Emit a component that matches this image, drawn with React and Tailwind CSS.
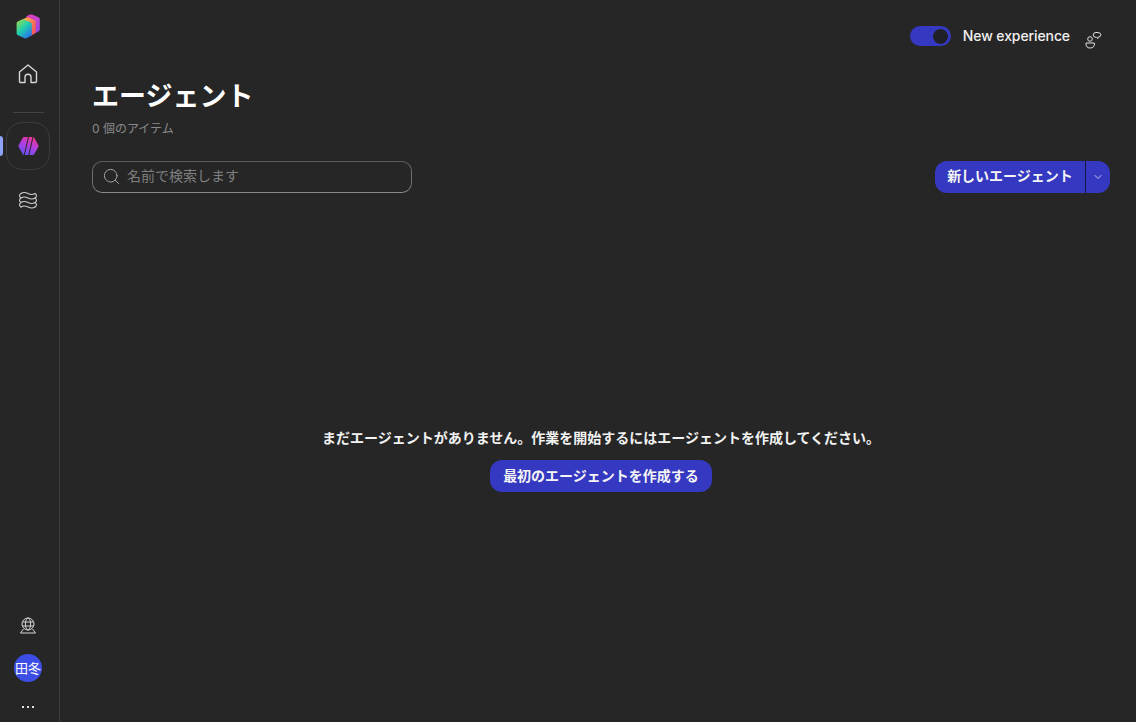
import { ChevronDown, Search } from "lucide-react";

const font = "font-['Inter','Noto_Sans_CJK_JP',sans-serif]";

function Logo() {
  return (
    <svg width="24" height="25" viewBox="0 0 24 25">
      <defs>
        <linearGradient id="lg1" x1="0" y1="0" x2="0.5" y2="1">
          <stop offset="0" stopColor="#ec3fb8" />
          <stop offset="1" stopColor="#9a46e6" />
        </linearGradient>
        <linearGradient id="lg2" x1="0" y1="0" x2="1" y2="0.6">
          <stop offset="0" stopColor="#fbc64e" />
          <stop offset="1" stopColor="#f2585a" />
        </linearGradient>
        <linearGradient id="lg3" x1="0" y1="0" x2="0.8" y2="1">
          <stop offset="0" stopColor="#a5dc48" />
          <stop offset="0.5" stopColor="#1fcfae" />
          <stop offset="1" stopColor="#2b6cf2" />
        </linearGradient>
      </defs>
      <path d="M10 2.500 14 .6q1-.4 2 0l6.500 2.700q1.300.6 1.300 2v10q0 1.300-1.100 2L17 20.500V8z" fill="url(#lg1)" />
      <path d="M5.500 6 10.500 3.500q1-.4 2 0l6 2.600q1.300.6 1.300 2v10.400l-5 3.500V9z" fill="url(#lg2)" />
      <path d="M.6 9.500q0-1.500 1.200-2L6 5.600q1-.4 2 0l6.500 3q1.300.6 1.300 2v9.600q0 1.200-1 1.800l-4.300 2.300q-1 .5-2 0l-5.900-2.800Q.6 20.800.6 19.400z" fill="url(#lg3)" />
    </svg>
  );
}

function HomeIcon() {
  return (
    <svg width="20" height="20" viewBox="0 0 20 20" fill="none" stroke="#d6d6d6" strokeWidth="1.4" strokeLinejoin="round">
      <path d="M1.500 8 10 1l8.500 7v9.200q0 1.300-1.300 1.300H13v-5.300a3 3 0 0 0-6 0v5.300H2.800q-1.300 0-1.300-1.300z" />
    </svg>
  );
}

function AgentIcon() {
  return (
    <svg width="21" height="20" viewBox="0 0 21 20">
      <defs>
        <linearGradient id="ag" x1="0.7" y1="0" x2="0.2" y2="1">
          <stop offset="0" stopColor="#f0358f" />
          <stop offset="0.45" stopColor="#b23fe0" />
          <stop offset="1" stopColor="#5f52f5" />
        </linearGradient>
      </defs>
      <path d="M6 1h9q.8 0 1.200.7l4.200 7.600q.4.700 0 1.400l-4.200 7.600q-.4.700-1.200.7H6q-.8 0-1.200-.7L.6 10.700q-.4-.7 0-1.400l4.200-7.600Q5.200 1 6 1z" fill="url(#ag)" />
      <path d="M10.500 1 6.300 19M15 1 10.800 19" stroke="#262626" strokeWidth="1" fill="none" />
    </svg>
  );
}

function WavesIcon() {
  return (
    <svg width="20" height="20" viewBox="0 0 20 20" fill="none" stroke="#cfcfcf" strokeWidth="1.100" strokeLinecap="round">
      <path d="M3 3.500c3-2 5-1 7 0s4 2 7 0" />
      <path d="M3 8c3-2 5-1 7 0s4 2 7 0" />
      <path d="M3 12.500c3-2 5-1 7 0s4 2 7 0" />
      <path d="M3 17c3-2 5-1 7 0s4 2 7 0" />
      <path d="M17 3.500c2 1 2 3.500 0 4.500M17 8c2 1 2 3.500 0 4.500M17 12.500c2 1 2 3.500 0 4.500" />
      <path d="M3 3.500c-2 1-2 3.500 0 4.500M3 8c-2 1-2 3.500 0 4.500M3 12.500c-2 1-2 3.500 0 4.500" />
    </svg>
  );
}

function GlobeIcon() {
  return (
    <svg width="18" height="18" viewBox="0 0 18 18" fill="none" stroke="#d4d4d4" strokeWidth="1">
      <circle cx="9" cy="7" r="6" />
      <ellipse cx="9" cy="7" rx="2.600" ry="6" />
      <path d="M3.300 5h11.400M3.300 9h11.400" />
      <path d="M4.500 12 1.500 16h15l-3-4" strokeLinejoin="round" />
    </svg>
  );
}

function PeopleIcon() {
  return (
    <svg width="18" height="18" viewBox="0 0 18 18" fill="none" stroke="#e0e0e0" strokeWidth="1">
      <circle cx="5" cy="8" r="2.300" />
      <path d="M11 1.500q-2.800 0-2.800 2.400t2.800 2.400h.4l1.500 1.400V6.200q3-.2 3-2.300T13 1.500z" />
      <path d="M1 12h8.400q.4 5-4.200 5T1 12z" />
    </svg>
  );
}

export default function App() {
  return (
    <div className={`flex h-[722px] w-[1136px] overflow-hidden bg-[#262626] text-white ${font}`}>
      {/* Sidebar */}
      <aside className="flex w-[60px] shrink-0 flex-col items-center border-r border-[#3d3d3d] pt-[14px] pb-[11px] pr-[3px]">
        <Logo />
        <div className="mt-[25px]">
          <HomeIcon />
        </div>
        <div className="mt-[28px] h-px w-[31px] bg-[#444444]" />
        <div className="relative mt-[9px] flex w-full justify-center">
          <span className="absolute left-0 top-[14px] h-[20px] w-[3px] rounded-r-sm bg-[#8ea2f8]" />
          <div className="flex h-[48px] w-[44px] items-center justify-center rounded-[16px] border border-[#3c3c3c]">
            <AgentIcon />
          </div>
        </div>
        <div className="mt-[20px]">
          <WavesIcon />
        </div>
        <div className="mt-auto">
          <GlobeIcon />
        </div>
        <div className="mt-[19px] flex h-[28px] w-[28px] items-center justify-center rounded-full bg-[#3d4ee6] text-[13px] leading-none text-white">
          田冬
        </div>
        <div className="mt-[24px] flex gap-[3px] pb-[3px]">
          <span className="h-[2px] w-[2px] bg-[#e0e0e0]" />
          <span className="h-[2px] w-[2px] bg-[#e0e0e0]" />
          <span className="h-[2px] w-[2px] bg-[#e0e0e0]" />
        </div>
      </aside>

      {/* Main */}
      <main className="flex min-w-0 flex-1 flex-col pl-[32px] pr-[26px]">
        <div className="flex h-[72px] shrink-0 items-center justify-end pr-[7px]">
          <div className="flex h-[20px] w-[41px] items-center justify-end rounded-full bg-[#3538c0] pr-[3px]">
            <span className="h-[15px] w-[15px] rounded-full bg-[#1f2028]" />
          </div>
          <span className="ml-[12px] text-[14px] font-medium leading-none tracking-[-0.1px] text-[#f0f0f0]">New experience</span>
          <span className="ml-[15px] mt-[8px] flex">
            <PeopleIcon />
          </span>
        </div>

        <h1 className="mt-[1px] text-[27px] font-bold leading-[48px] text-white">エージェント</h1>
        <p className="mt-[-1px] text-[12px] leading-[18px] text-[#8a8a8a]">0 個のアイテム</p>

        <div className="mt-[23px] flex items-center justify-between">
          <label className="flex h-[32px] w-[320px] items-center rounded-[10px] border border-[#6e6e6e] border-t-[#5c5c5c] border-b-[#8a8a8a] pl-[9px]">
            <Search size={19} strokeWidth={1.2} className="mb-[2px] text-[#a8a8a8]" />
            <input
              placeholder="名前で検索します"
              className="ml-[6px] mb-[4px] flex-1 bg-transparent text-[14px] outline-none placeholder:text-[#7f7f7f]"
            />
          </label>
          <div className="flex h-[32px] items-stretch overflow-hidden rounded-[12px] bg-[#3538c0] text-[14px] font-semibold text-[#f4f4f4]">
            <button className="w-[150px] pb-[4px] text-center">新しいエージェント</button>
            <span className="w-px bg-[#15153f]" />
            <button className="flex w-[24px] items-center justify-center">
              <ChevronDown size={12} strokeWidth={1.5} />
            </button>
          </div>
        </div>

        <div className="mt-[235px] flex flex-col items-center">
          <p className="text-[14px] font-semibold leading-[20px] text-[#f2f2f2]">
            まだエージェントがありません。作業を開始するにはエージェントを作成してください。
          </p>
          <button className="mt-[12px] h-[32px] w-[222px] rounded-[12px] bg-[#3538c0] pb-[2px] text-[14px] font-semibold text-[#f4f4f4]">
            最初のエージェントを作成する
          </button>
        </div>
      </main>
    </div>
  );
}
